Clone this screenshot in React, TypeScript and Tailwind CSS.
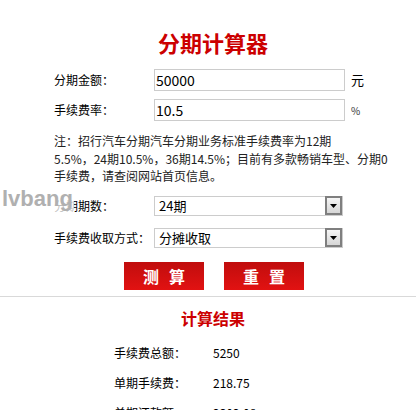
import React from "react";

const cjk = "font-['Noto_Sans_CJK_SC',sans-serif]";

const FormRow = ({ label, children }: { label: string; children: React.ReactNode }) => (
  <div className="flex items-center">
    <div className="w-[100px] text-[12px] leading-[22px] text-black">{label}</div>
    {children}
  </div>
);

const FakeSelect = ({ value }: { value: string }) => (
  <div className="flex h-[20px] w-[189px] items-center justify-between border border-[#cccccc] bg-white">
    <span className="pl-[4px] text-[13px] leading-[18px] text-black">{value}</span>
    <span className="flex h-[19px] w-[17px] items-center justify-center border-2 border-[#7f7f7f] bg-gradient-to-b from-[#f6f6f6] to-[#d6d6d6]">
      <svg width="7" height="4" viewBox="0 0 7 4">
        <path d="M0 0h7L3.5 4z" fill="#000" />
      </svg>
    </span>
  </div>
);

const RedButton = ({ text }: { text: [string, string] }) => (
  <button className="flex h-[28px] w-[80px] items-center justify-center gap-[10px] bg-gradient-to-b from-[#c00d0d] to-[#e21212] text-[16px] font-bold text-white">
    <span>{text[0]}</span>
    <span>{text[1]}</span>
  </button>
);

const ResultRow = ({ label, value }: { label: string; value: string }) => (
  <div className="flex h-[30px] items-center text-[12px] text-black">
    <div className="w-[99px]">{label}</div>
    <div>{value}</div>
  </div>
);

export default function App() {
  return (
    <div className={`relative h-[410px] w-[416px] overflow-hidden bg-white ${cjk}`}>
      <h1 className="pl-[10px] pt-[30px] text-center text-[22px] font-bold leading-[24px] text-[#cc0000]">
        分期计算器
      </h1>

      <div className="ml-[54px] mt-[15px] flex flex-col">
        <FormRow label="分期金额：">
          <div className="h-[22px] w-[191px] border border-[#cccccc] pl-[1px] text-[14px] leading-[20px] text-black">
            50000
          </div>
          <span className="ml-[6px] text-[13px]">元</span>
        </FormRow>
        <div className="mt-[8px]">
          <FormRow label="手续费率：">
            <div className="h-[22px] w-[191px] border border-[#cccccc] pl-[1px] text-[14px] leading-[20px] text-black">
              10.5
            </div>
            <span className="ml-[6px] text-[10px] text-[#333]">%</span>
          </FormRow>
        </div>

        <p className="mt-[11px] whitespace-nowrap text-[12px] leading-[17.5px] text-[#222]">
          注：招行汽车分期汽车分期业务标准手续费率为12期
          <br />
          5.5%，24期10.5%，36期14.5%；目前有多款畅销车型、分期0
          <br />
          手续费，请查阅网站首页信息。
        </p>

        <div className="mt-[10px] flex flex-col gap-[10px]">
          <FormRow label="分期期数：">
            <FakeSelect value="24期" />
          </FormRow>
          <FormRow label="手续费收取方式：">
            <FakeSelect value="分摊收取" />
          </FormRow>
        </div>
      </div>

      <div className="mt-[13px] flex justify-center gap-[20px] pl-[12px]">
        <RedButton text={["测", "算"]} />
        <RedButton text={["重", "置"]} />
      </div>

      <div className="mt-[6px] h-px w-full bg-[#d9d9d9]" />

      <h2 className="mt-[11px] pl-[10px] text-center text-[16px] font-bold leading-[20px] text-[#cc0000]">
        计算结果
      </h2>

      <div className="ml-[114px] mt-[10px]">
        <ResultRow label="手续费总额：" value="5250" />
        <ResultRow label="单期手续费：" value="218.75" />
        <ResultRow label="单期还款额：" value="2302.08" />
      </div>

      <span className="absolute left-[2px] top-[186px] bg-white/75 pr-[1px] font-['Liberation_Sans',sans-serif] text-[22px] font-bold leading-[26px] text-[#b0b0b0]">
        lvbang
      </span>
    </div>
  );
}
